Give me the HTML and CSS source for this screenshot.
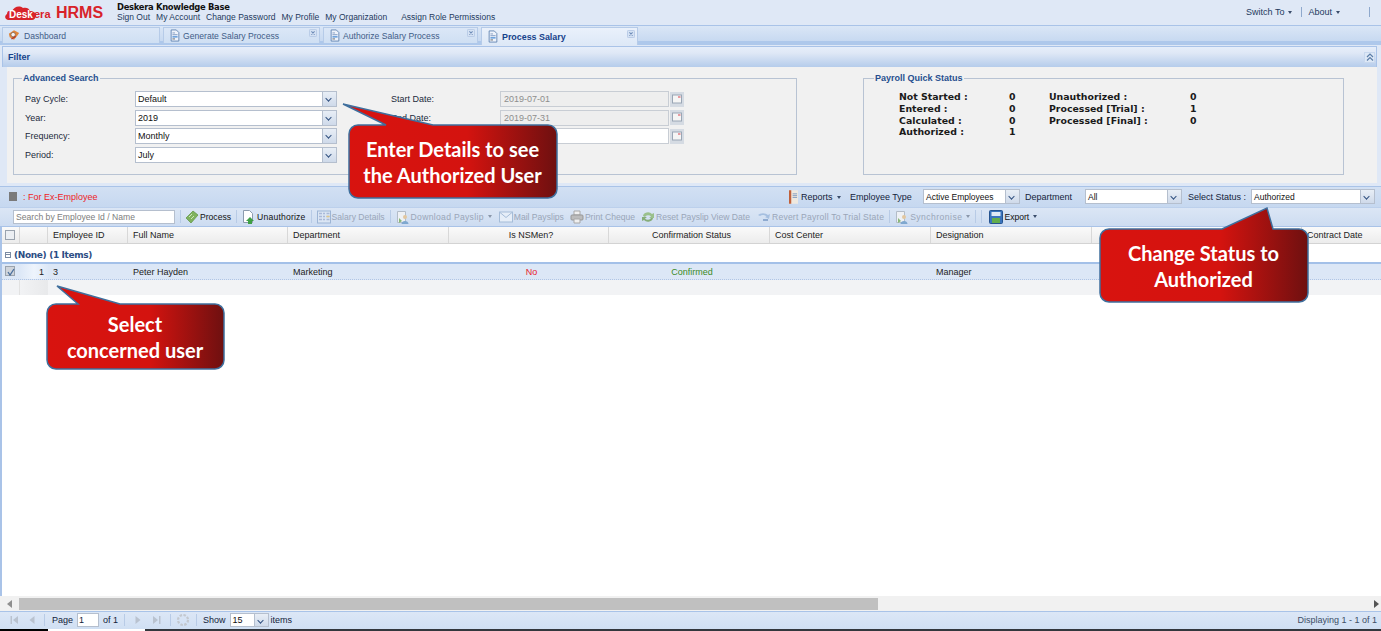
FILE: index.html
```html
<!DOCTYPE html>
<html lang="en">
<head>
<meta charset="utf-8">
<title>Deskera HRMS - Process Salary</title>
<link rel="stylesheet" href="styles.css">
</head>
<body>
<svg class="defs" width="0" height="0">
  <defs>
    <linearGradient id="cg1" x1="0" x2="1" y1="0" y2="0"><stop offset="0" stop-color="#d8130f"/><stop offset=".58" stop-color="#d4130f"/><stop offset="1" stop-color="#6e1010"/></linearGradient>
    <symbol id="i-doc" viewBox="0 0 14 14"><path d="M2.5.5h6l3 3v10h-9z" fill="#eef3fb" stroke="#5b7fae"/><path d="M4 4h3M4 6h6" stroke="#7c97bd"/><rect x="4" y="7.5" width="6" height="2" fill="#6fa3dc"/><path d="M4 11h3" stroke="#555"/></symbol>
    <symbol id="i-x" viewBox="0 0 9 9"><rect x=".5" y=".5" width="8" height="8" rx="1" fill="#d5e2f4" stroke="#b4c8e4"/><path d="M2.7 2.7l3.6 3.6M6.3 2.7L2.7 6.3" stroke="#6f8db8" stroke-width="1.2"/></symbol>
    <symbol id="i-cal" viewBox="0 0 14 15"><rect width="14" height="15" fill="#d5dbe3"/><rect x="2.5" y="3" width="9" height="8" fill="#f5f5f5" stroke="#9aa6b5"/><rect x="8" y="4" width="2.500" height="2" fill="#e89aa0"/></symbol>
    <symbol id="i-process" viewBox="0 0 14 14"><path d="M1 8l7-7 5 4-7 8z" fill="#7fb25f" stroke="#5c9440" stroke-width=".7"/><path d="M4 7l3-3M6 9l3-3" stroke="#cfe6bd"/></symbol>
    <symbol id="i-unauth" viewBox="0 0 14 14"><path d="M1.500.5h6l3 3v9h-9z" fill="#fff" stroke="#8c9bae"/><path d="M8 7l4 4h-2v3H6v-3H4z" fill="#3f9f45"/></symbol>
    <symbol id="i-grid" viewBox="0 0 14 13"><rect x=".5" y=".5" width="13" height="12" fill="#dbe6f4" stroke="#9db5d5"/><path d="M2 3h3M6 3h2M9.500 3h3M2 6h3M6 6h2M9.500 6h3M2 9h3M6 9h2M9.500 9h3" stroke="#a9b9d8" stroke-width="1.500"/><path d="M9.500 6h3" stroke="#e0c98b" stroke-width="1.500"/></symbol>
    <symbol id="i-down" viewBox="0 0 14 14"><path d="M1.500 1.500h8v11h-8z" fill="#eef1f5" stroke="#b3bcc8"/><circle cx="9" cy="7" r="2" fill="#e2c7a0"/><path d="M5.500 14c0-4 7-4 7 0z" fill="#7fa8cf"/><path d="M3 8l3 3-3 2z" fill="#8ab878"/></symbol>
    <symbol id="i-mail" viewBox="0 0 14 11"><rect x=".5" y=".5" width="13" height="10" fill="#e6eef8" stroke="#a5bcd8"/><path d="M1 1l6 5 6-5" fill="none" stroke="#a5bcd8"/></symbol>
    <symbol id="i-print" viewBox="0 0 14 14"><path d="M4 1h6v4H4z" fill="#f0f0f0" stroke="#a8a8a8"/><rect x="1" y="5" width="12" height="5" rx="1" fill="#bcbcbc" stroke="#979797"/><path d="M4 9h6v4H4z" fill="#f0f0f0" stroke="#a8a8a8"/></symbol>
    <symbol id="i-reset" viewBox="0 0 14 14"><path d="M2 6a5 4 0 0 1 9-2l2-1v5H8l2-1.500A3.500 3 0 0 0 4 7z" fill="#9ac08c"/><path d="M12 8a5 4 0 0 1-9 2l-2 1V7h5L4 8.500A3.500 3 0 0 0 10 8z" fill="#86ad79"/></symbol>
    <symbol id="i-revert" viewBox="0 0 14 12"><path d="M1 4a6 4 0 0 1 10 0l2-1-1 5-4-2 1.500-.5A4 3 0 0 0 3 5z" fill="#a5bfe0"/><path d="M6 9h5" stroke="#8eaad0" stroke-width="2"/></symbol>
    <symbol id="i-export" viewBox="0 0 14 14"><rect x=".5" y=".5" width="13" height="13" rx="1" fill="#3a74bd" stroke="#25538f"/><rect x="2.500" y="2" width="9" height="4" fill="#dfe9f5"/><rect x="3" y="8" width="8" height="5" fill="#62ad4d"/></symbol>
    <symbol id="i-book" viewBox="0 0 10 15"><rect width="10" height="15" fill="#efe9df"/><rect width="2.500" height="15" fill="#c0603b"/><path d="M4 4h5M4 6h5M4 8h5" stroke="#7c97bd"/></symbol>
    <symbol id="i-first" viewBox="0 0 10 10"><path d="M1.500 1h1.500v8H1.500zM9 1v8L4 5z" fill="#b9c2cf"/></symbol>
    <symbol id="i-prev" viewBox="0 0 8 10"><path d="M6.500 1v8L1.500 5z" fill="#b9c2cf"/></symbol>
    <symbol id="i-next" viewBox="0 0 8 10"><path d="M1.500 1v8l5-4z" fill="#b9c2cf"/></symbol>
    <symbol id="i-last" viewBox="0 0 10 10"><path d="M1 1v8l5-4zM7 1h1.500v8H7z" fill="#b9c2cf"/></symbol>
    <symbol id="i-refresh" viewBox="0 0 14 14"><circle cx="7" cy="7" r="5" fill="none" stroke="#c3c8cf" stroke-width="2.200" stroke-dasharray="2.500 1.400"/></symbol>
  </defs>
</svg>

<div class="page">
  <header class="top">
    <div class="logo">
      <svg class="logo-cloud" viewBox="0 0 34 16" width="34" height="16"><path d="M4 16c-3-1-4-4-1-6 0-3 2-4 5-3 2-4 7-6 11-3 3-1 6 0 7 3 3 0 6 2 6 4 0 3-2 5-4 5z" fill="#d8232a"/></svg>
      <span class="logo-desk">Desk</span><span class="logo-era">era</span>
      <span class="logo-hrms">HRMS</span>
    </div>
    <div class="top-main">
      <div class="company">Deskera Knowledge Base</div>
      <nav class="links">
        <a>Sign Out</a><a>My Account</a><a>Change Password</a><a>My Profile</a><a>My Organization</a><a class="gap">Assign Role Permissions</a>
      </nav>
    </div>
    <div class="top-right">
      <span class="tr-item">Switch To <i class="caret"></i></span>
      <span class="vsep"></span>
      <span class="tr-item">About <i class="caret"></i></span>
      <span class="vsep last"></span>
    </div>
  </header>

  <div class="tabs">
    <div class="tab t1">
      <svg class="ic14" viewBox="0 0 14 14"><path d="M1 5l6-4 6 3-2 3-4 5-5-3z" fill="#e0853a"/><circle cx="6" cy="6" r="2.600" fill="#f4f4f4" stroke="#8b6a55"/><path d="M4 11l5-3" stroke="#b03a2e" stroke-width="1.500"/></svg>
      <span>Dashboard</span>
    </div>
    <div class="tab t2"><svg class="ic14"><use href="#i-doc"/></svg><span>Generate Salary Process</span><svg class="tabx"><use href="#i-x"/></svg></div>
    <div class="tab t3"><svg class="ic14"><use href="#i-doc"/></svg><span>Authorize Salary Process</span><svg class="tabx"><use href="#i-x"/></svg></div>
    <div class="tab t4 active"><svg class="ic14"><use href="#i-doc"/></svg><span>Process Salary</span><svg class="tabx"><use href="#i-x"/></svg></div>
  </div>

  <section class="panel">
    <div class="panel-head">
      <span>Filter</span>
      <span class="collapse"><svg viewBox="0 0 10 10" width="10" height="10"><path d="M2 5l3-3 3 3M2 8.500l3-3 3 3" fill="none" stroke="#5c7ea8" stroke-width="1.200"/></svg></span>
    </div>
    <div class="panel-body">
      <fieldset class="fs fs-search">
        <legend>Advanced Search</legend>
        <div class="form">
          <label>Pay Cycle:</label><div class="combo c-main"><span>Default</span><b></b></div>
          <label class="l2">Start Date:</label><div class="date off"><span>2019-07-01</span></div><svg class="cal"><use href="#i-cal"/></svg>
          <label>Year:</label><div class="combo c-main"><span>2019</span><b></b></div>
          <label class="l2">End Date:</label><div class="date off"><span>2019-07-31</span></div><svg class="cal"><use href="#i-cal"/></svg>
          <label>Frequency:</label><div class="combo c-main"><span>Monthly</span><b></b></div>
          <label class="l2"></label><div class="date"></div><svg class="cal"><use href="#i-cal"/></svg>
          <label>Period:</label><div class="combo c-main"><span>July</span><b></b></div>
        </div>
      </fieldset>
      <fieldset class="fs fs-status">
        <legend>Payroll Quick Status</legend>
        <div class="status">
          <span>Not Started :</span><span class="v1">0</span><span>Unauthorized :</span><span class="v2">0</span>
          <span>Entered :</span><span class="v1">0</span><span>Processed [Trial] :</span><span class="v2">1</span>
          <span>Calculated :</span><span class="v1">0</span><span>Processed [Final] :</span><span class="v2">0</span>
          <span>Authorized :</span><span class="v1">1</span>
        </div>
      </fieldset>
    </div>
  </section>

  <div class="tb1">
    <i class="ex-sq"></i><span class="ex-text">: For Ex-Employee</span>
    <div class="tb1-right">
      <svg class="book"><use href="#i-book"/></svg>
      <span class="rep">Reports <i class="caret"></i></span>
      <span class="etype">Employee Type</span>
      <div class="combo c-emp"><span>Active Employees</span><b></b></div>
      <span class="dept">Department</span>
      <div class="combo c-dept"><span>All</span><b></b></div>
      <span class="sel">Select Status :</span>
      <div class="combo c-status"><span>Authorized</span><b></b></div>
    </div>
  </div>

  <div class="tb2">
    <div class="search">Search by Employee Id / Name</div>
    <span class="tsep"></span>
    <span class="btn"><svg class="ic14"><use href="#i-process"/></svg>Process</span>
    <span class="tsep"></span>
    <span class="btn wide2"><svg class="ic14"><use href="#i-unauth"/></svg>Unauthorize</span>
    <span class="tsep"></span>
    <span class="btn dis"><svg class="ic14"><use href="#i-grid"/></svg>Salary Details</span>
    <span class="tsep"></span>
    <span class="btn dis wide3"><svg class="ic14"><use href="#i-down"/></svg>Download Payslip <i class="caret"></i></span>
    <span class="btn dis m1"><svg class="ic14"><use href="#i-mail"/></svg>Mail Payslips</span>
    <span class="btn dis m2"><svg class="ic14"><use href="#i-print"/></svg>Print Cheque</span>
    <span class="btn dis m2"><svg class="ic14"><use href="#i-reset"/></svg>Reset Payslip View Date</span>
    <span class="btn dis m1 wide2"><svg class="ic14"><use href="#i-revert"/></svg>Revert Payroll To Trial State</span>
    <span class="tsep"></span>
    <span class="btn dis wide4"><svg class="ic14"><use href="#i-down"/></svg>Synchronise <i class="caret"></i></span>
    <span class="tsep"></span><span class="tsep near"></span>
    <span class="btn m3"><svg class="ic14"><use href="#i-export"/></svg>Export <i class="caret"></i></span>
  </div>

  <main class="grid">
    <div class="cols ghead">
      <div class="hc"><i class="chk"></i></div><div class="hc"></div><div class="hc">Employee ID</div><div class="hc">Full Name</div><div class="hc">Department</div><div class="hc ctr">Is NSMen?</div><div class="hc ctr">Confirmation Status</div><div class="hc">Cost Center</div><div class="hc">Designation</div><div class="hc"></div><div class="hc">Contract Date</div>
    </div>
    <div class="group"><i class="minus"></i>(None) (1 Items)</div>
    <div class="cols row sel-row">
      <div class="c"><i class="chk on"><svg viewBox="0 0 10 10" width="10" height="10"><path d="M2 5l2 3 4-6" fill="none" stroke="#4a6f9d" stroke-width="1.300"/></svg></i></div>
      <div class="c num">1</div><div class="c">3</div><div class="c">Peter Hayden</div><div class="c">Marketing</div><div class="c ctr no">No</div><div class="c ctr yes">Confirmed</div><div class="c"></div><div class="c">Manager</div><div class="c"></div><div class="c"></div>
    </div>
    <div class="cols row empty"><div class="c"></div><div class="c"></div></div>
    <div class="grid-fill"></div>
    <div class="hscroll">
      <svg width="6" height="8" viewBox="0 0 6 8"><path d="M5 0v8L0 4z" fill="#8f8f8f"/></svg>
      <div class="thumb"></div>
      <svg class="sr" width="6" height="8" viewBox="0 0 6 8"><path d="M0 0v8l5-4z" fill="#555"/></svg>
    </div>
  </main>

  <footer class="paging">
    <svg class="p10 pf"><use href="#i-first"/></svg>
    <svg class="p10 pp"><use href="#i-prev"/></svg>
    <span class="tsep a"></span>
    <span>Page</span>
    <div class="pgbox">1</div>
    <span>of 1</span>
    <span class="tsep b"></span>
    <svg class="p10 pn"><use href="#i-next"/></svg>
    <svg class="p10 pl"><use href="#i-last"/></svg>
    <span class="tsep c1"></span>
    <svg class="ic14 pr"><use href="#i-refresh"/></svg>
    <span class="tsep d"></span>
    <span>Show</span>
    <div class="combo c-show"><span>15</span><b></b></div>
    <span class="items">items</span>
    <span class="display">Displaying 1 - 1 of 1</span>
  </footer>
  <div class="edge"><i></i><i></i><i></i></div>

  <aside class="callout c-a">
    <svg class="shape" width="209" height="75" viewBox="0 0 209 75"><path d="M10 1H38L-5-20 85 1H200a9 9 0 0 1 9 9V65a9 9 0 0 1-9 9H10a9 9 0 0 1-9-9V10a9 9 0 0 1 9-9z" fill="url(#cg1)" stroke="#3f6f9d" stroke-width="1.500"/></svg>
    <p>Enter Details to see<br>the Authorized User</p>
  </aside>
  <aside class="callout c-b">
    <svg class="shape" width="209" height="75" viewBox="0 0 209 75"><path d="M10 1H123L168-20 174 1H200a9 9 0 0 1 9 9V65a9 9 0 0 1-9 9H10a9 9 0 0 1-9-9V10a9 9 0 0 1 9-9z" fill="url(#cg1)" stroke="#3f6f9d" stroke-width="1.500"/></svg>
    <p>Change Status to<br>Authorized</p>
  </aside>
  <aside class="callout c-c">
    <svg class="shape" width="178" height="67" viewBox="0 0 178 67"><path d="M10 1H32L11-17 74 1H169a9 9 0 0 1 9 9V57a9 9 0 0 1-9 9H10a9 9 0 0 1-9-9V10a9 9 0 0 1 9-9z" fill="url(#cg1)" stroke="#3f6f9d" stroke-width="1.500"/></svg>
    <p>Select<br>concerned user</p>
  </aside>
</div>
</body>
</html>
```
FILE: styles.css
```css
* { box-sizing: border-box; }
html, body { margin: 0; padding: 0; height: 100%; overflow: hidden; }
body { background: #fff; font: 9px/12px "Liberation Sans", Arial, sans-serif; color: #222; }
.defs { position: absolute; }
svg { display: block; flex: none; overflow: visible; }
i { display: block; font-style: normal; }

.page { position: relative; width: 1381px; height: 631px; display: flex; flex-direction: column; overflow: hidden; }

/* header */
.top { height: 26px; flex: none; display: flex; background: #dfe8f6; border-bottom: 1px solid #a9c3e8; }
.logo { position: relative; width: 117px; flex: none; }
.logo-cloud { position: absolute; left: 4px; top: 4px; }
.logo-desk { position: absolute; left: 9px; top: 9px; color: #fff; font: 700 10px/11px "Liberation Sans", sans-serif; }
.logo-era { position: absolute; left: 34px; top: 9px; color: #d8232a; font: 700 11px/11px "Liberation Sans", sans-serif; }
.logo-hrms { position: absolute; left: 56px; top: 4px; color: #d8232a; font: 700 16px/18px "Liberation Sans", sans-serif; }
.top-main { padding-top: 2px; }
.company { font: 700 8.400px/10px "DejaVu Sans", sans-serif; letter-spacing: -.3px; color: #111; height: 9px; }
.links { display: flex; gap: 6px; height: 12px; color: #23395d; font-size: 8.500px; }
.links .gap { margin-left: 8px; }
.top-right { margin-left: auto; display: flex; align-items: center; color: #23395d; padding-right: 11px; padding-bottom: 1px; }
.tr-item { display: flex; align-items: center; gap: 2px; }
.vsep { width: 1px; height: 10px; background: #8ea8cc; margin: 0 6px 0 9px; }
.vsep.last { margin: 0 0 0 29px; }
.caret { display: inline-block; width: 0; height: 0; border: 2px solid transparent; border-top: 3px solid #3a4d6b; border-bottom: 0; margin-left: 2px; vertical-align: middle; }

/* tabs */
.tabs { height: 19px; flex: none; display: flex; gap: 3px; padding: 1px 0 0 2px; background: linear-gradient(#dae6f6, #c7d9f1 80%, #aec8eb 80%); font-size: 8.600px; }
.tab { height: 16px; display: flex; align-items: center; gap: 3px; padding-left: 5px; border: 1px solid #b6cbe8; border-bottom: 0; background: linear-gradient(#dbe7f7, #cfdff3); color: #3f5c87; position: relative; }
.t1 { width: 158px; gap: 4px; } .t2 { width: 157px; gap: 2px; } .t3 { width: 155px; gap: 2px; } .t4 { width: 157px; }
.tab.active { background: linear-gradient(#eaf1fb, #dde8f7); color: #15428b; font-weight: 700; height: 18px; font-size: 8.900px; }
.ic14 { width: 14px; height: 14px; }
.tab .ic14 { width: 12px; height: 13px; }
.tabx { width: 8px; height: 8px; margin-left: auto; margin-right: 2px; margin-top: -5px; }

/* filter */
.panel { height: 141px; flex: none; background: #dfe8f6; padding: 0 4px 0 2px; }
.panel-head { margin: 1px 0 0; height: 21px; border: 1px solid #a9c3e8; border-bottom: 0; background: linear-gradient(#e6eefa, #dfe8f6 30%, #b5cceb); font-weight: 700; color: #15428b; display: flex; align-items: center; justify-content: space-between; padding: 0 1px 0 5px; }
.collapse { width: 11px; height: 11px; background: #dde8f6; border: 1px solid #c8d8ee; display: flex; align-items: center; justify-content: center; }
.panel-body { height: 116px; background: #f1f1f1; margin: 0 0 0 5px; display: flex; padding: 5px 0 0 6px; }
.fs { margin: 0; min-width: 0; padding: 0; border: 1px solid #b8c3d3; height: 103px; position: relative; }
.fs legend { margin-left: 8px; padding: 0 1px; font-weight: 700; color: #274f8f; line-height: 12px; height: 12px; }
.fs-search { width: 784px; }
.fs-status { width: 481px; margin-left: 66px; }
.fs-status legend { margin-left: 10px; }

.form { display: grid; grid-template-columns: 110px 202px 54px 109px 169px 15px; grid-auto-rows: 16px; row-gap: 2.700px; padding: 7px 0 0 11px; align-items: center; color: #1c2a3c; }
.form label { display: block; }
.l2 { grid-column: 4; color: #1c2a3c; }
.combo { display: flex; height: 16px; border: 1px solid #b5bfce; background: #fff; align-items: center; }
.combo span { padding-left: 2px; flex: 1; white-space: nowrap; overflow: hidden; color: #111; }
.combo b { width: 14px; height: 100%; background: linear-gradient(#e8eef6, #cfdaea); border-left: 1px solid #b5bfce; position: relative; flex: none; }
.combo b::after { content: ""; position: absolute; left: 3px; top: 4px; width: 4px; height: 4px; border-right: 1.500px solid #2c4c7c; border-bottom: 1.500px solid #2c4c7c; transform: rotate(45deg) scale(.9); }
.date { height: 16px; border: 1px solid #c8cdd4; background: #fff; padding-left: 3px; line-height: 14px; color: #8d8d8d; }
.date.off { background: #eeeeee; }
.cal { width: 14px; height: 15px; margin-left: 1px; }

.status { display: grid; grid-template-columns: 110px 40px 141px 20px; grid-auto-rows: 11.800px; padding: 7px 0 0 35px; font: 700 9.400px/12px "DejaVu Sans", sans-serif; color: #1a1a1a; }

/* toolbars */
.tb1 { height: 21px; flex: none; display: flex; align-items: center; padding: 0 6px 1px 9px; background: linear-gradient(#d2e0f3, #c6d8f0); border-top: 1px solid #a9c3e8; }
.ex-sq { width: 8px; height: 9px; background: #7a7a7a; }
.ex-text { color: #ee1c25; margin-left: 6px; }
.tb1-right { margin-left: auto; display: flex; align-items: center; color: #14233a; }
.book { width: 9px; height: 14px; margin-right: 3px; }
.rep { width: 49px; }
.etype { width: 73px; }
.c-emp { width: 97px; height: 15px; margin-right: 5px; }
.dept { width: 60px; }
.c-dept { width: 97px; height: 15px; margin-right: 6px; }
.sel { width: 63px; }
.c-status { width: 124px; height: 15px; }
.tb1 .combo span { font-size: 8.500px; }

.tb2 { height: 20px; flex: none; display: flex; align-items: center; padding: 0 0 1px 13px; background: linear-gradient(#dbe6f5, #cddcf1); border-top: 1px solid #bcd0ec; border-bottom: 1px solid #a9c3e8; white-space: nowrap; font-size: 8.600px; }
.search { width: 162px; height: 14px; border: 1px solid #b5bfce; background: #fff; color: #7d7d7d; padding-left: 2px; line-height: 12px; }
.tsep { width: 1px; height: 13px; background: #b8cbe6; margin: 0 5px; flex: none; }
.search + .tsep { margin-right: 4px; }
.tsep.near { margin-left: 0; }
.btn { display: flex; align-items: center; gap: 1px; color: #111; }
.btn.dis { color: #9aa6b8; }
.wide2 { letter-spacing: .2px; } .wide3 { letter-spacing: .3px; } .wide4 { letter-spacing: .45px; }
.m1 { margin-left: 7px; } .m2 { margin-left: 6px; } .m3 { margin-left: 2px; }
.btn .caret { margin-left: 3px; border-top-color: #8a97aa; }
.m3 .caret { border-top-color: #3a4d6b; }

/* grid */
.grid { flex: 1; min-height: 0; display: flex; flex-direction: column; border-left: 2px solid #a9c3e8; background: #fff; }
.cols { display: grid; grid-template-columns: 18px 28px 80px 160px 161px 160px 161px 161px 161px 210px 1fr; flex: none; }
.ghead { height: 17px; background: linear-gradient(#fafafa, #ececec); border-bottom: 1px solid #d3d3d3; }
.hc { border-right: 1px solid #d8d8d8; padding-left: 5px; line-height: 16px; color: #222; white-space: nowrap; }
.hc:last-child { border-right: 0; }
.hc:first-child { padding: 3px 0 0 3px; }
.ctr { text-align: center; }
.chk { width: 10px; height: 10px; background: #eceff3; border: 1px solid #9aa3ae; }
.group { height: 20px; flex: none; padding: 3px 0 0 3px; font: 700 9px/12px "DejaVu Sans", sans-serif; letter-spacing: -.35px; color: #2c4d84; display: flex; align-items: center; gap: 3px; border-bottom: 2px solid #a3c0e8; }
.minus { width: 6px; height: 6px; border: 1px solid #7b8ba3; background: linear-gradient(#7b8ba3, #7b8ba3) center / 4px 1px no-repeat; }
.row { height: 16px; border-bottom: 1px dotted #b0c5e5; line-height: 16px; }
.c { padding-left: 5px; white-space: nowrap; overflow: hidden; }
.c:first-child { padding: 2px 0 0 3px; }
.c.num { text-align: right; padding: 0 4px 0 0; background: linear-gradient(90deg, #dde8f7, #eef4fc 50%, #dde8f7); }
.sel-row { background: #dce7f6; }
.chk.on { background: #cfd4db; }
.no { color: #e8192c; }
.yes { color: #3a8a1f; }
.empty { height: 15px; background: #f2f3f5; border-bottom: 0; }
.empty .c:first-child { border-right: 1px solid #e2e2e2; }
.empty .c:nth-child(2) { background: linear-gradient(90deg, #f2f3f5, #e8e9eb); }
.grid-fill { flex: 1; }
.hscroll { height: 15px; flex: none; display: flex; align-items: center; background: #f1f1f1; padding: 0 1px 0 7px; margin-left: -2px; }
.thumb { width: 859px; height: 12px; background: #c0c0c0; margin-left: 6px; }
.sr { margin-left: auto; }

/* paging */
.paging { height: 18px; flex: none; display: flex; align-items: center; padding: 0 0 1px 9px; background: linear-gradient(#dce7f6, #d0dff3); border-top: 1px solid #a9c3e8; color: #14233a; }
.p10 { width: 10px; height: 10px; }
.pp { margin-left: 9px; width: 8px; }
.paging .tsep { height: 12px; }
.tsep.a { margin: 0 7px 0 8px; }
.pgbox { width: 22px; height: 14px; border: 1px solid #b5bfce; background: #fff; margin: 0 4px; line-height: 12px; padding-left: 1px; }
.tsep.b { margin: 0 9px 0 6px; }
.pn { width: 8px; }
.pl { margin-left: 10px; }
.tsep.c1 { margin: 0 5px 0 8px; }
.tsep.d { margin: 0 6px; }
.c-show { width: 39px; height: 14px; margin: 0 2px 0 4px; }
.display { margin-left: auto; padding-right: 4px; color: #3d4e66; }
.edge { height: 2px; flex: none; display: flex; }
.edge i:nth-child(1) { width: 48px; background: #000; }
.edge i:nth-child(2) { width: 97px; background: #fff; }
.edge i:nth-child(3) { flex: 1; background: #33373d; }

/* callouts */
.callout { position: absolute; margin: 0; }
.callout p { position: relative; margin: 0; height: 100%; display: flex; align-items: center; justify-content: center; text-align: center; color: #fff; font: 700 20px/26px Lato, "Open Sans", sans-serif; }
.shape { position: absolute; left: 0; top: 0; }
.c-a { left: 348px; top: 124px; width: 209px; height: 75px; }
.c-b { left: 1099px; top: 228px; width: 209px; height: 75px; }
.c-c { left: 46px; top: 303px; width: 178px; height: 67px; }
```
